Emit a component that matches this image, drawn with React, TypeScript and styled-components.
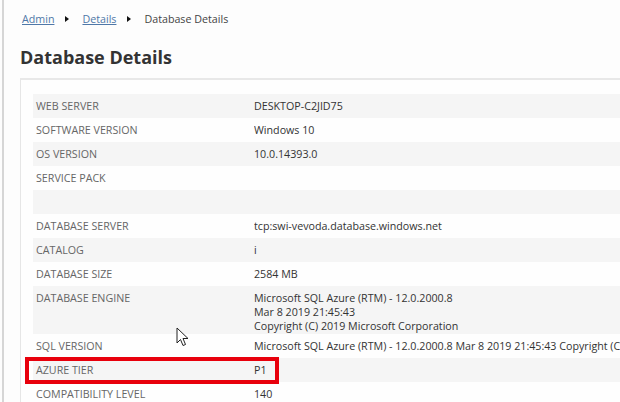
import React from "react";
import styled, { createGlobalStyle } from "styled-components";

const Global = createGlobalStyle`
  html, body {
    margin: 0;
    padding: 0;
    background: #fdfdfd;
    font-family: "Open Sans", "Liberation Sans", sans-serif;
    overflow: hidden;
  }
`;

type Row = { label: string; value?: string[] };

const rows: Row[] = [
  { label: "WEB SERVER", value: ["DESKTOP-C2JID75"] },
  { label: "SOFTWARE VERSION", value: ["Windows 10"] },
  { label: "OS VERSION", value: ["10.0.14393.0"] },
  { label: "SERVICE PACK" },
  { label: "" },
  { label: "DATABASE SERVER", value: ["tcp:swi-vevoda.database.windows.net"] },
  { label: "CATALOG", value: ["i"] },
  { label: "DATABASE SIZE", value: ["2584 MB"] },
  {
    label: "DATABASE ENGINE",
    value: [
      "Microsoft SQL Azure (RTM) - 12.0.2000.8",
      "Mar 8 2019 21:45:43",
      "Copyright (C) 2019 Microsoft Corporation",
    ],
  },
  {
    label: "SQL VERSION",
    value: [
      "Microsoft SQL Azure (RTM) - 12.0.2000.8 Mar 8 2019 21:45:43 Copyright (C) 2019 Microsoft Corporation",
    ],
  },
  { label: "AZURE TIER", value: ["P1"] },
  { label: "COMPATIBILITY LEVEL", value: ["140"] },
];

const App = () => {
  return (
    <Page>
      <Global />
      <Breadcrumb>
        <Crumb href="#">Admin</Crumb>
        <Sep />
        <Crumb href="#">Details</Crumb>
        <Sep />
        <span>Database Details</span>
      </Breadcrumb>
      <Title>Database Details</Title>
      <Panel>
        <Table>
          <colgroup>
            <col style={{ width: 221 }} />
            <col />
          </colgroup>
          <tbody>
            {rows.map((r, i) => (
              <Tr key={i} $odd={i % 2 === 0}>
                <Label>{r.label}</Label>
                <Value>
                  {(r.value || []).map((v, j) => (
                    <div key={j}>{v}</div>
                  ))}
                </Value>
              </Tr>
            ))}
          </tbody>
        </Table>
      </Panel>
      <Highlight />
      <Cursor width="13" height="20" viewBox="0 0 13 20">
        <path
          d="M1 1 L1 16 L4.5 12.5 L7 18.5 L9.5 17.5 L7 11.5 L12 11.5 Z"
          fill="#fff"
          stroke="#222"
          strokeWidth="1"
          strokeLinejoin="round"
        />
      </Cursor>
    </Page>
  );
};

export default App;

const Page = styled.div`
  position: relative;
  width: 620px;
  height: 402px;
  margin-left: 2px;
  border-left: 2px solid #d6d6d6;
  padding-left: 16px;
  box-sizing: border-box;
  overflow: hidden;
`;

const Breadcrumb = styled.div`
  display: flex;
  align-items: center;
  height: 38px;
  padding-left: 2px;
  font-size: 10.7px;
  color: #444;
`;

const Crumb = styled.a`
  color: #4f78a8;
  text-decoration: underline;
`;

const Sep = styled.span`
  width: 0;
  height: 0;
  border-top: 3.5px solid transparent;
  border-bottom: 3.5px solid transparent;
  border-left: 4px solid #111;
  margin: 0 13px 0 11px;
`;

const Title = styled.h1`
  margin: 7px 0 0;
  height: 33px;
  font-size: 18px;
  font-weight: 700;
  color: #333;
`;

const Panel = styled.div`
  width: 640px;
  border-top: 2px solid #e8e8e8;
  border-left: 1px solid #e6e6e6;
  padding: 14px 0 0 12px;
  background: #fefefe;
`;

const Table = styled.table`
  width: 100%;
  table-layout: fixed;
  border-collapse: collapse;
  font-size: 10.7px;
`;

const Tr = styled.tr<{ $odd: boolean }>`
  background: ${(p) => (p.$odd ? "#f5f5f5" : "#fefefe")};
  height: 24px;
  vertical-align: top;
`;

const Label = styled.td`
  padding: 5px 0 0 3px;
  color: #666;
  white-space: nowrap;
  overflow: hidden;
`;

const Value = styled.td`
  padding: 5px 0 1px 0;
  color: #333;
  white-space: nowrap;
  overflow: hidden;
  line-height: 14px;
`;

const Highlight = styled.div`
  position: absolute;
  left: 21px;
  top: 357px;
  width: 254px;
  height: 27px;
  border: 4px solid #e8000c;
  box-sizing: border-box;
`;

const Cursor = styled.svg`
  position: absolute;
  left: 172px;
  top: 327px;
`;
